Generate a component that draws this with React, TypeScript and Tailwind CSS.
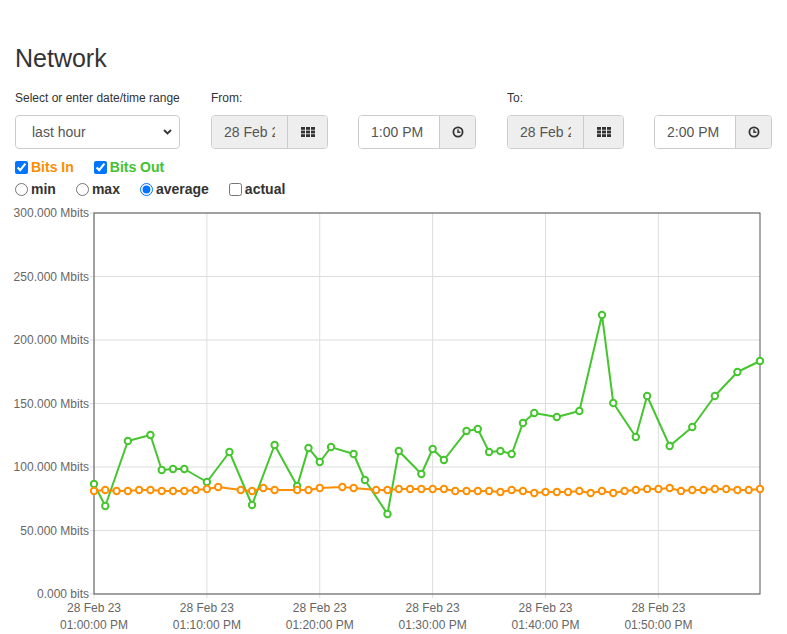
import React from 'react'

const font = { fontFamily: '"Liberation Sans", Arial, sans-serif' }

// chart geometry (pixels inside the svg)
const PLOT_L = 94
const PLOT_R = 760
const PLOT_T = 9
const PLOT_B = 390
const MAX = 300
const STEP_X = (PLOT_R - PLOT_L) / 59

const xOf = (min: number) => PLOT_L + min * STEP_X
const yOf = (v: number) => PLOT_B - (v / MAX) * (PLOT_B - PLOT_T)

// [minute, Mbits]
const bitsOut: [number, number][] = [
  [0, 86.6], [1, 69.3], [3, 120.5], [5, 125.2], [6, 97.6], [7, 98.4], [8, 98.4],
  [10, 88.2], [12, 111.8], [14, 70.1], [16, 117.3], [18, 85.0], [19, 115.0],
  [20, 103.9], [21, 115.7], [23, 110.2], [24, 89.8], [26, 63.0], [27, 112.6],
  [29, 94.5], [30, 114.2], [31, 105.5], [33, 128.3], [34, 129.9], [35, 111.8],
  [36, 112.6], [37, 110.2], [38, 134.6], [39, 142.5], [41, 139.4], [43, 144.1],
  [45, 219.7], [46, 150.4], [48, 123.6], [49, 155.9], [51, 116.5], [53, 131.5],
  [55, 155.9], [57, 174.8], [59, 183.5],
]

const bitsIn: [number, number][] = [
  [0, 81.1], [1, 81.9], [2, 81.1], [3, 81.1], [4, 81.9], [5, 81.9], [6, 81.1],
  [7, 81.1], [8, 81.1], [9, 81.9], [10, 82.7], [11, 84.3], [13, 81.9], [14, 81.1],
  [15, 83.5], [16, 81.9], [18, 81.9], [19, 81.9], [20, 83.5], [22, 84.3],
  [23, 83.5], [25, 81.9], [26, 81.9], [27, 82.7], [28, 82.7], [29, 82.7],
  [30, 82.7], [31, 82.7], [32, 81.1], [33, 81.1], [34, 81.1], [35, 81.1],
  [36, 80.3], [37, 81.9], [38, 81.1], [39, 79.5], [40, 80.3], [41, 80.3],
  [42, 80.3], [43, 81.1], [44, 79.5], [45, 81.1], [46, 79.5], [47, 81.1],
  [48, 81.9], [49, 82.7], [50, 82.7], [51, 83.5], [52, 81.1], [53, 81.9],
  [54, 81.9], [55, 82.7], [56, 82.7], [57, 81.9], [58, 81.9], [59, 82.7],
]

const yTicks = [
  [300, '300.000 Mbits'],
  [250, '250.000 Mbits'],
  [200, '200.000 Mbits'],
  [150, '150.000 Mbits'],
  [100, '100.000 Mbits'],
  [50, '50.000 Mbits'],
  [0, '0.000 bits'],
] as const

const xTicks = ['01:00:00 PM', '01:10:00 PM', '01:20:00 PM', '01:30:00 PM', '01:40:00 PM', '01:50:00 PM']

function GridIcon() {
  return (
    <svg width="14" height="10" viewBox="0 0 14 10" fill="#333">
      {[0, 1, 2].map(r =>
        [0, 1, 2].map(c => (
          <rect key={`${r}-${c}`} x={c * 5} y={r * 3.6} width="4" height="2.8" />
        ))
      )}
    </svg>
  )
}

function ClockIcon() {
  return (
    <svg width="12" height="12" viewBox="0 0 12 12" fill="none" stroke="#333">
      <circle cx="6" cy="6" r="4.6" strokeWidth="1.8" />
      <path d="M6 3.2V6.3H8.4" strokeWidth="1.4" />
    </svg>
  )
}

function DateGroup({ value }: { value: string }) {
  return (
    <div className="flex h-[34px] w-[117px] rounded-[4px] border border-[#ccc] overflow-hidden">
      <div className="w-[75px] bg-[#eee] px-[12px] flex items-center text-[14px] text-[#555]">
        <div className="overflow-hidden whitespace-nowrap">{value}</div>
      </div>
      <div className="flex-1 bg-[#eee] border-l border-[#ccc] flex items-center justify-center">
        <GridIcon />
      </div>
    </div>
  )
}

function TimeGroup({ value }: { value: string }) {
  return (
    <div className="flex h-[34px] w-[118px] rounded-[4px] border border-[#ccc] overflow-hidden">
      <div className="w-[80px] bg-white px-[12px] flex items-center text-[14px] text-[#555] whitespace-nowrap">
        {value}
      </div>
      <div className="flex-1 bg-[#eee] border-l border-[#ccc] flex items-center justify-center">
        <ClockIcon />
      </div>
    </div>
  )
}

function Series({ data, color }: { data: [number, number][]; color: string }) {
  const d = data.map(([m, v], i) => `${i ? 'L' : 'M'}${xOf(m).toFixed(1)} ${yOf(v).toFixed(1)}`).join(' ')
  return (
    <g>
      <path d={d} fill="none" stroke={color} strokeWidth="2" strokeLinejoin="round" />
      {data.map(([m, v]) => (
        <circle key={m} cx={xOf(m)} cy={yOf(v)} r="3.2" fill="#fff" stroke={color} strokeWidth="2" />
      ))}
    </g>
  )
}

function Chart() {
  return (
    <svg width="787" height="430" className="block" style={font}>
      {yTicks.map(([v]) => (
        <line key={v} x1={PLOT_L - 4} x2={PLOT_R} y1={yOf(v)} y2={yOf(v)} stroke="#ddd" strokeWidth="1" />
      ))}
      {xTicks.map((_, i) => (
        <line key={i} x1={xOf(i * 10)} x2={xOf(i * 10)} y1={PLOT_T} y2={PLOT_B + 4} stroke="#ddd" strokeWidth="1" />
      ))}
      <rect x={PLOT_L} y={PLOT_T} width={PLOT_R - PLOT_L} height={PLOT_B - PLOT_T} fill="none" stroke="#555" strokeWidth="1" />
      {yTicks.map(([v, label]) => (
        <text key={v} x={89} y={yOf(v) + 4} textAnchor="end" fontSize="12" fill="#666">
          {label}
        </text>
      ))}
      {xTicks.map((t, i) => (
        <g key={t}>
          <text x={xOf(i * 10)} y={PLOT_B + 18} textAnchor="middle" fontSize="12" fill="#666">
            28 Feb 23
          </text>
          <text x={xOf(i * 10)} y={PLOT_B + 35} textAnchor="middle" fontSize="12" fill="#666">
            {t}
          </text>
        </g>
      ))}
      <Series data={bitsOut} color="#45c52e" />
      <Series data={bitsIn} color="#ff8f00" />
    </svg>
  )
}

export default function App() {
  return (
    <div className="min-h-screen bg-white text-[#333]" style={font}>
      <div className="px-[15px]">
        <h2 className="pt-[45px] text-[25px] leading-[26px] font-normal text-[#333]">Network</h2>

        <div className="mt-[19px] flex gap-[31px]">
          <div className="w-[166px]">
            <div className="text-[12px] leading-[17px] mb-[8px]">Select or enter date/time range</div>
            <div className="h-[34px] rounded-[4px] border border-[#ccc] flex items-center justify-between pl-[16px] pr-[7px] text-[14px] text-[#555]">
              <span>last hour</span>
              <svg width="9" height="6" viewBox="0 0 9 6" fill="none" stroke="#333" strokeWidth="1.8">
                <path d="M1 1L4.5 4.5L8 1" />
              </svg>
            </div>
          </div>
          <div>
            <div className="text-[12px] leading-[17px] mb-[8px]">From:</div>
            <div className="flex gap-[30px]">
              <DateGroup value="28 Feb 2023" />
              <TimeGroup value="1:00 PM" />
            </div>
          </div>
          <div>
            <div className="text-[12px] leading-[17px] mb-[8px]">To:</div>
            <div className="flex gap-[30px]">
              <DateGroup value="28 Feb 2023" />
              <TimeGroup value="2:00 PM" />
            </div>
          </div>
        </div>

        <div className="mt-[7px] h-[22px] flex items-center gap-[20px] text-[14px] font-bold">
          <label className="flex items-center">
            <input type="checkbox" defaultChecked className="m-0 mr-[3px]" />
            <span className="text-[#ff8c00]">Bits In</span>
          </label>
          <label className="flex items-center">
            <input type="checkbox" defaultChecked className="m-0 mr-[3px]" />
            <span className="text-[#44c22c]">Bits Out</span>
          </label>
        </div>
        <div className="h-[22px] flex items-center gap-[20px] text-[14px] font-bold text-[#333]">
          <label className="flex items-center">
            <input type="radio" name="agg" className="m-0 mr-[3px]" />
            <span>min</span>
          </label>
          <label className="flex items-center">
            <input type="radio" name="agg" className="m-0 mr-[3px]" />
            <span>max</span>
          </label>
          <label className="flex items-center">
            <input type="radio" name="agg" defaultChecked className="m-0 mr-[3px]" />
            <span>average</span>
          </label>
          <label className="flex items-center">
            <input type="checkbox" className="m-0 mr-[3px]" />
            <span>actual</span>
          </label>
        </div>
      </div>

      <div className="mt-[4px]">
        <Chart />
      </div>
    </div>
  )
}
